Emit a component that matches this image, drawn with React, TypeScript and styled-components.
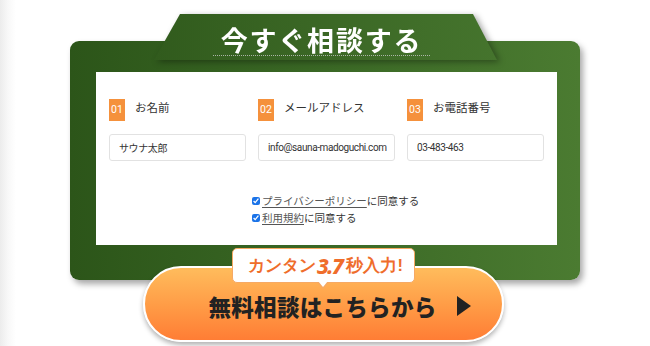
import React from "react";
import styled, { createGlobalStyle } from "styled-components";

const GlobalStyle = createGlobalStyle`
  html, body {
    margin: 0;
    padding: 0;
  }
  body {
    background: linear-gradient(90deg, #ececec 0px, #f8f8f8 8px, #ffffff 16px);
    font-family: "Noto Sans CJK JP", "Noto Sans", sans-serif;
    color: #333;
  }
  * { box-sizing: border-box; }
`;

const Page = styled.div`
  width: 650px;
  height: 346px;
  overflow: hidden;
  padding: 41px 0 0 70px;
`;

const Panel = styled.section`
  position: relative;
  width: 510px;
  height: 239px;
  border-radius: 9px;
  background: linear-gradient(90deg, #2c5519 0%, #3a6825 50%, #4b7b31 100%);
  box-shadow: 3px 4px 6px rgba(0, 0, 0, 0.35);
  padding: 31px 23px 35px 26px;
`;

const TabWrap = styled.div`
  position: absolute;
  left: 84px;
  top: -27px;
  width: 343px;
  height: 46px;
  filter: drop-shadow(3px 2px 3px rgba(0, 0, 0, 0.35));
`;

const TabShape = styled.div`
  position: absolute;
  inset: 0;
  background: linear-gradient(90deg, #315b1d 0%, #45742d 100%);
  clip-path: polygon(26px 0, 319px 0, 100% 100%, 0 100%);
`;

const TabTitleWrap = styled.div`
  position: absolute;
  left: -8px;
  right: 0;
  top: 12px;
  display: flex;
  justify-content: center;
`;

const TabTitle = styled.h2`
  margin: 0;
  padding: 0 8px 1px;
  font-size: 27px;
  line-height: 28px;
  font-weight: 700;
  color: #ffffff;
  letter-spacing: 1.8px;
  border-bottom: 1px dotted rgba(200, 200, 200, 0.8);
`;

const FormBox = styled.div`
  background: #ffffff;
  height: 173px;
  padding: 27px 13px 0;
`;

const Fields = styled.div`
  display: grid;
  grid-template-columns: repeat(3, 137px);
  column-gap: 12px;
`;

const Field = styled.div`
  display: flex;
  flex-direction: column;
`;

const FieldHead = styled.div`
  display: flex;
  align-items: flex-start;
  gap: 10px;
  height: 22px;
`;

const Badge = styled.span`
  width: 16px;
  height: 22px;
  background: #f5913c;
  color: #ffffff;
  font-size: 10.5px;
  line-height: 22px;
  text-align: center;
  font-family: Roboto, "Noto Sans", sans-serif;
`;

const Label = styled.span`
  font-size: 11.5px;
  line-height: 16px;
  color: #333;
`;

const TextInput = styled.input`
  margin-top: 13px;
  height: 27px;
  width: 100%;
  border: 1px solid #e2e2e2;
  border-radius: 3px;
  padding: 0 2px 0 9px;
  font-family: Roboto, "Noto Sans CJK JP", sans-serif;
  font-size: 10px;
  letter-spacing: -0.4px;
  color: #333;
  background: #fff;
  outline: none;
`;

const Agree = styled.div`
  margin: 31px 0 0 143px;
  display: flex;
  flex-direction: column;
`;

const AgreeLine = styled.label`
  display: flex;
  align-items: center;
  height: 17px;
  font-size: 10.5px;
  color: #333;
`;

const Check = styled.input`
  width: 8px;
  height: 8px;
  margin: 0 2px 0 0;
  accent-color: #1a73e8;
`;

const Link = styled.span`
  color: #555;
  text-decoration: underline;
  text-underline-offset: 2px;
`;

const ButtonRow = styled.div`
  margin-top: -14px;
  padding-left: 73px;
`;

const CtaButton = styled.button`
  position: relative;
  width: 361px;
  height: 76px;
  border: 2px solid #ffffff;
  border-radius: 38px;
  background: linear-gradient(180deg, #ffbc5c 0%, #ff9a45 55%, #ff7d35 100%);
  box-shadow: 0 3px 5px rgba(0, 0, 0, 0.3);
  display: flex;
  align-items: center;
  justify-content: center;
  gap: 20px;
  padding: 3px 0 0 32px;
  cursor: pointer;
`;

const CtaText = styled.span`
  font-family: "Noto Sans CJK JP", sans-serif;
  font-size: 22.5px;
  font-weight: 900;
  color: #222;
  letter-spacing: 0.3px;
`;

const Bubble = styled.div`
  position: absolute;
  left: 87px;
  top: -20px;
  width: 183px;
  height: 35px;
  background: #ffffff;
  border: 1px solid #f6a964;
  border-radius: 5px;
  display: flex;
  align-items: center;
  padding-left: 15px;
  color: #ef6d2b;
  font-size: 16.5px;
  font-weight: 700;
  white-space: nowrap;
  &::before {
    content: "";
    position: absolute;
    left: 84px;
    bottom: -7px;
    border-left: 6px solid transparent;
    border-right: 6px solid transparent;
    border-top: 7px solid #f6a964;
  }
  &::after {
    content: "";
    position: absolute;
    left: 85px;
    bottom: -5px;
    border-left: 5px solid transparent;
    border-right: 5px solid transparent;
    border-top: 6px solid #ffffff;
  }
`;

const BigNum = styled.span`
  font-family: "Noto Sans", sans-serif;
  font-size: 21px;
  font-weight: 800;
  font-style: italic;
  letter-spacing: -1.5px;
  margin: 0 4px 0 1px;
`;

const fields = [
  { no: "01", label: "お名前", value: "サウナ太郎" },
  { no: "02", label: "メールアドレス", value: "info@sauna-madoguchi.com" },
  { no: "03", label: "お電話番号", value: "03-483-463" },
];

export default function App() {
  return (
    <>
      <GlobalStyle />
      <Page>
        <Panel>
          <TabWrap>
            <TabShape />
            <TabTitleWrap>
              <TabTitle>今すぐ相談する</TabTitle>
            </TabTitleWrap>
          </TabWrap>
          <FormBox>
            <Fields>
              {fields.map((f) => (
                <Field key={f.no}>
                  <FieldHead>
                    <Badge>{f.no}</Badge>
                    <Label>{f.label}</Label>
                  </FieldHead>
                  <TextInput readOnly defaultValue={f.value} />
                </Field>
              ))}
            </Fields>
            <Agree>
              <AgreeLine>
                <Check type="checkbox" defaultChecked />
                <Link>プライバシーポリシー</Link>に同意する
              </AgreeLine>
              <AgreeLine>
                <Check type="checkbox" defaultChecked />
                <Link>利用規約</Link>に同意する
              </AgreeLine>
            </Agree>
          </FormBox>
        </Panel>
        <ButtonRow>
          <CtaButton type="button">
            <Bubble>
              カンタン<BigNum>3.7</BigNum>秒入力!
            </Bubble>
            <CtaText>無料相談はこちらから</CtaText>
            <svg width="14" height="20" viewBox="0 0 14 20">
              <path d="M0 0 L14 10 L0 20 Z" fill="#222" />
            </svg>
          </CtaButton>
        </ButtonRow>
      </Page>
    </>
  );
}
